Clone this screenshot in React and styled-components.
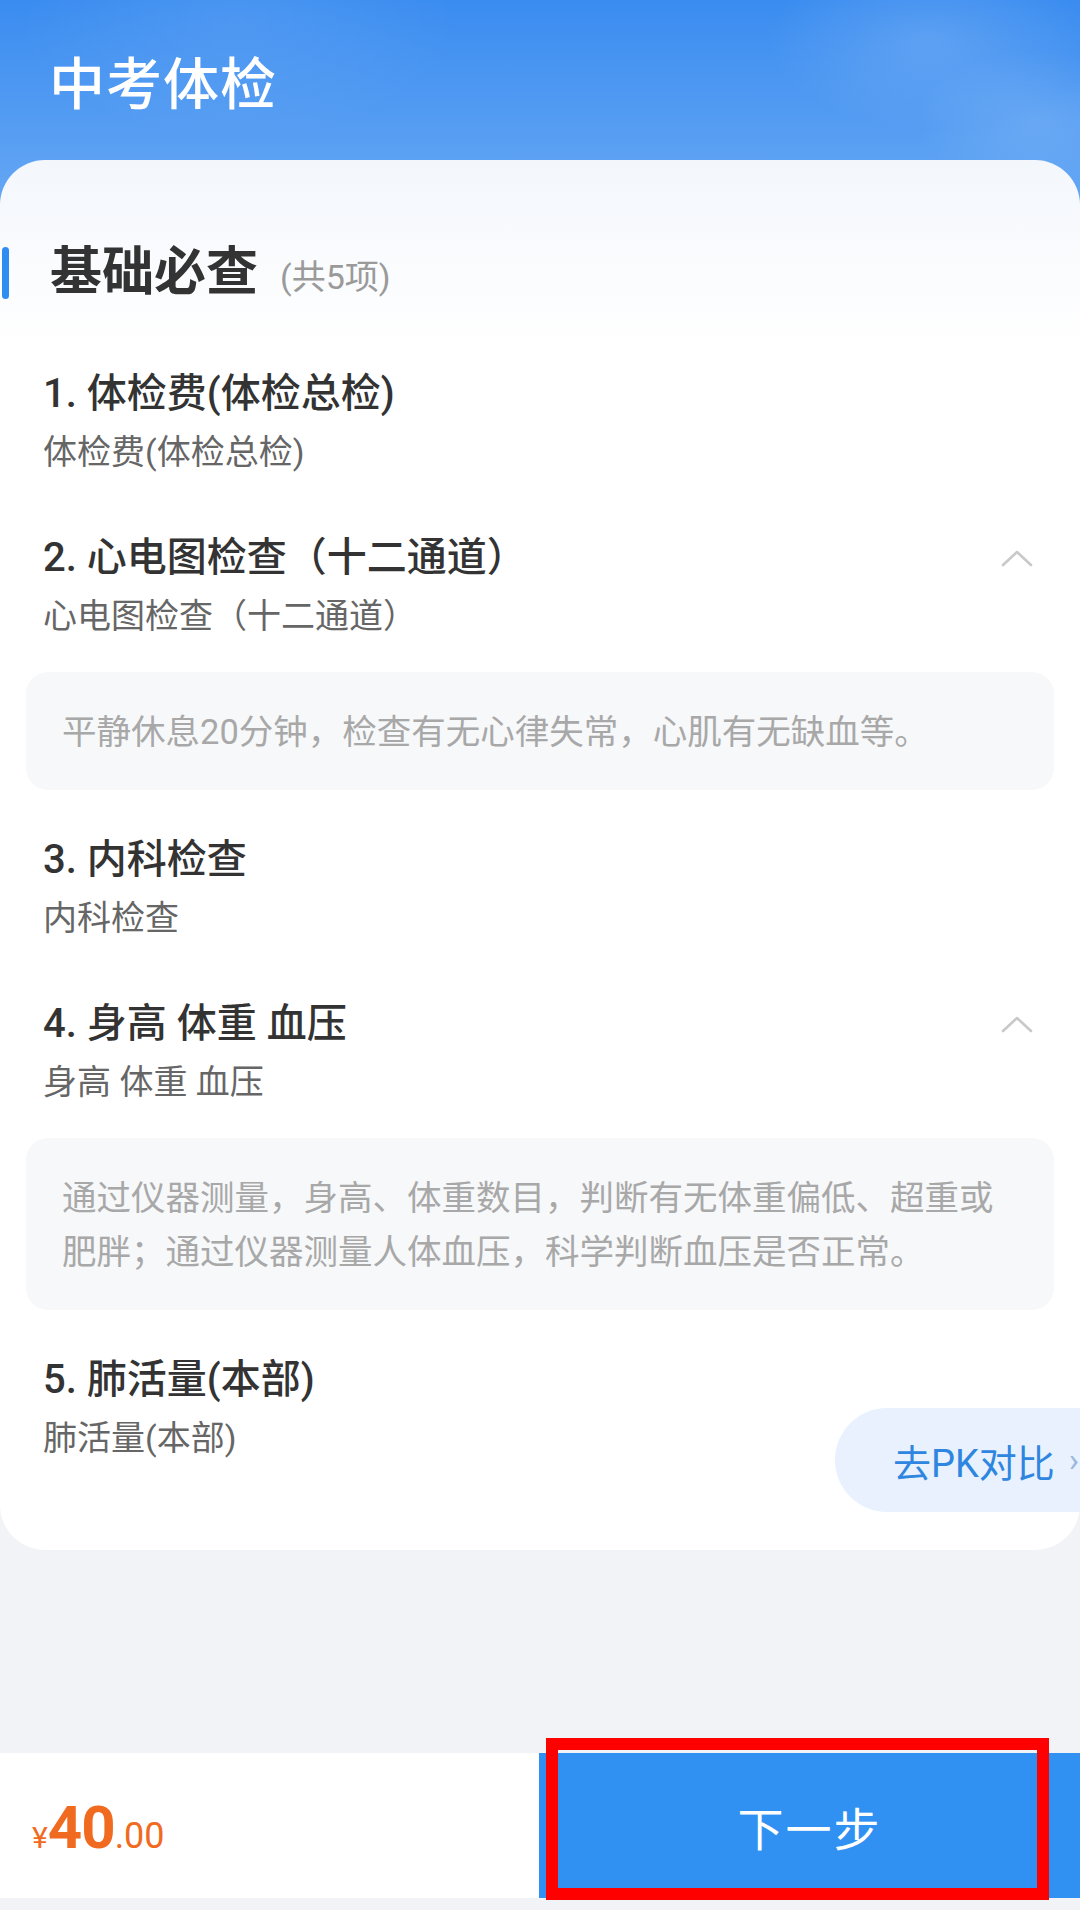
import React from 'react';
import styled, { createGlobalStyle } from 'styled-components';

const GlobalStyle = createGlobalStyle`
  html, body { margin: 0; padding: 0; }
  body {
    width: 1080px;
    overflow: hidden;
    font-family: Roboto, "Noto Sans CJK SC", sans-serif;
    background: #f2f3f7;
  }
  * { box-sizing: border-box; }
`;

const Page = styled.div`
  position: relative;
  width: 1080px;
  min-height: 1910px;
  display: flex;
  flex-direction: column;
  overflow: hidden;
  background:
    radial-gradient(ellipse 160px 90px at 86% 40px, rgba(255,255,255,0.14), transparent),
    radial-gradient(ellipse 120px 70px at 96% 120px, rgba(255,255,255,0.12), transparent),
    radial-gradient(ellipse 220px 120px at 22% 20px, rgba(255,255,255,0.08), transparent),
    linear-gradient(180deg, #3a8cf0 0px, #5aa0f3 150px, #6aaaf4 230px, #f2f3f7 230px);
`;

const Header = styled.header`
  height: 160px;
  padding: 55px 0 0 49px;
`;

const HeaderTitle = styled.h1`
  margin: 0;
  font-size: 56px;
  line-height: 60px;
  font-weight: 500;
  color: #ffffff;
  letter-spacing: 1px;
`;

const Card = styled.main`
  position: relative;
  border-radius: 45px;
  background: linear-gradient(180deg, #f3f7fc 0px, #fbfcfe 120px, #ffffff 190px);
  padding: 83px 26px 30px 0;
`;

const SectionHead = styled.div`
  display: flex;
  align-items: center;
  height: 60px;
`;

const SectionBar = styled.span`
  width: 7px;
  height: 52px;
  margin-left: 2px;
  border-radius: 4px;
  background: #2f8cf0;
`;

const SectionTitle = styled.h2`
  margin: 0 0 0 41px;
  font-size: 52px;
  line-height: 60px;
  font-weight: 700;
  color: #333333;
`;

const SectionCount = styled.span`
  margin-left: 22px;
  font-size: 34px;
  line-height: 60px;
  color: #9a9a9a;
  padding-top: 8px;
`;

const List = styled.div`
  padding: 67px 0 0 26px;
`;

const Item = styled.section`
  padding-bottom: ${p => (p.$hasDesc ? 46 : 60)}px;
`;

const ItemRow = styled.div`
  display: flex;
  align-items: center;
  justify-content: space-between;
  padding: 0 21px 0 17px;
`;

const ItemTitle = styled.div`
  font-size: 40px;
  line-height: 48px;
  font-weight: 500;
  color: #333333;
`;

const ItemSub = styled.div`
  margin-top: 12px;
  padding-left: 17px;
  font-size: 34px;
  line-height: 44px;
  color: #666666;
`;

const Desc = styled.div`
  margin-top: 34px;
  padding: 33px 50px 31px 36px;
  border-radius: 22px;
  background: #f7f8fa;
  font-size: 34.5px;
  line-height: 54px;
  color: #a8a8a8;
`;

const PkButton = styled.div`
  position: absolute;
  left: 835px;
  top: 1248px;
  width: 280px;
  height: 104px;
  display: flex;
  align-items: center;
  padding-left: 58px;
  border-radius: 52px 0 0 52px;
  background: #e8f1fd;
  color: #2e86e0;
  font-size: 38px;
  white-space: nowrap;
`;

const PkArrow = styled.span`
  margin-left: 14px;
  color: #9bb8dc;
  font-size: 34px;
`;

const Footer = styled.footer`
  position: relative;
  margin-top: auto;
  margin-bottom: 12px;
  height: 145px;
  display: flex;
  align-items: center;
  background: #ffffff;
`;

const Price = styled.div`
  flex: 1;
  display: flex;
  align-items: baseline;
  padding: 0 0 0 32px;
  margin-top: 4px;
  color: #f06a1f;
  line-height: 1;
`;

const Yen = styled.span`
  font-size: 30px;
`;

const PriceInt = styled.span`
  font-size: 60px;
  font-weight: 700;
  letter-spacing: -1px;
`;

const PriceDec = styled.span`
  font-size: 36px;
`;

const NextButton = styled.button`
  width: 541px;
  height: 100%;
  border: 0;
  margin: 0;
  background: #3091f2;
  color: #ffffff;
  font-family: Roboto, "Noto Sans CJK SC", sans-serif;
  font-size: 46px;
  letter-spacing: 2px;
`;

const Highlight = styled.div`
  position: absolute;
  left: 546px;
  top: -15px;
  width: 503px;
  height: 162px;
  border: 12px solid #ff0000;
  pointer-events: none;
`;

const Chevron = () => (
  <svg width="32" height="18" viewBox="0 0 32 18" fill="none">
    <polyline points="2,16 16,3 30,16" stroke="#c9c9c9" strokeWidth="2.6" strokeLinecap="round" strokeLinejoin="round" />
  </svg>
);

const items = [
  { title: '1. 体检费(体检总检)', sub: '体检费(体检总检)' },
  {
    title: '2. 心电图检查（十二通道）',
    sub: '心电图检查（十二通道）',
    desc: '平静休息20分钟，检查有无心律失常，心肌有无缺血等。',
  },
  { title: '3. 内科检查', sub: '内科检查' },
  {
    title: '4. 身高 体重 血压',
    sub: '身高 体重 血压',
    desc: '通过仪器测量，身高、体重数目，判断有无体重偏低、超重或肥胖；通过仪器测量人体血压，科学判断血压是否正常。',
  },
  { title: '5. 肺活量(本部)', sub: '肺活量(本部)' },
];

export default function App() {
  return (
    <>
      <GlobalStyle />
      <Page>
        <Header>
          <HeaderTitle>中考体检</HeaderTitle>
        </Header>
        <Card>
          <SectionHead>
            <SectionBar />
            <SectionTitle>基础必查</SectionTitle>
            <SectionCount>(共5项)</SectionCount>
          </SectionHead>
          <List>
            {items.map((it) => (
              <Item key={it.title} $hasDesc={!!it.desc}>
                <ItemRow>
                  <ItemTitle>{it.title}</ItemTitle>
                  {it.desc && <Chevron />}
                </ItemRow>
                <ItemSub>{it.sub}</ItemSub>
                {it.desc && <Desc>{it.desc}</Desc>}
              </Item>
            ))}
          </List>
          <PkButton>
            去PK对比<PkArrow>›</PkArrow>
          </PkButton>
        </Card>
        <Footer>
          <Price>
            <Yen>¥</Yen>
            <PriceInt>40</PriceInt>
            <PriceDec>.00</PriceDec>
          </Price>
          <NextButton>下一步</NextButton>
          <Highlight />
        </Footer>
      </Page>
    </>
  );
}
